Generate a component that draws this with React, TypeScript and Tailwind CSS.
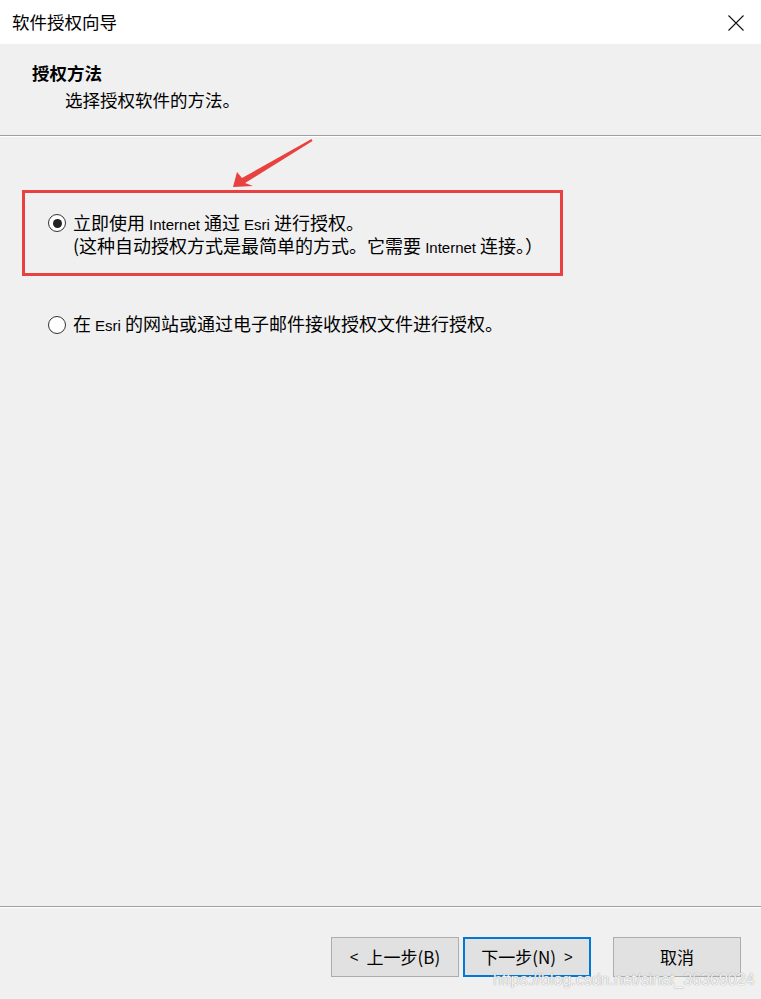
import React from "react";

const cjk = "font-['Noto_Sans_CJK_SC','Microsoft_YaHei',sans-serif]";
const lat = "font-['Liberation_Sans',Arial,sans-serif] text-[15px]";

function Radio({ checked }: { checked?: boolean }) {
  return (
    <span className="flex h-[18px] w-[18px] shrink-0 items-center justify-center rounded-full border border-[#333] bg-white">
      {checked && <span className="h-[9px] w-[9px] rounded-full bg-[#222]" />}
    </span>
  );
}

function Btn({ children, primary }: { children: React.ReactNode; primary?: boolean }) {
  return (
    <button
      className={
        primary
          ? "flex h-[40px] w-[128px] items-center justify-center border-2 border-[#0078d7] bg-[#e1e1e1] text-[17px] text-black"
          : "flex h-[40px] w-[128px] items-center justify-center border border-[#adadad] bg-[#e1e1e1] text-[17px] text-black"
      }
    >
      {children}
    </button>
  );
}

export default function App() {
  return (
    <div className={`relative flex h-[999px] w-[761px] flex-col overflow-hidden bg-[#f0f0f0] text-black ${cjk}`}>
      {/* title bar */}
      <div className="flex h-[44px] shrink-0 items-center justify-between bg-white pl-[12px] pr-[17px]">
        <span className="text-[17.5px] leading-none">软件授权向导</span>
        <svg width="16" height="16" viewBox="0 0 16 16" className="mt-[1px]">
          <path d="M0.5 0.5 L15.5 15.5 M15.5 0.5 L0.5 15.5" stroke="#111" strokeWidth="1.1" fill="none" />
        </svg>
      </div>

      {/* header */}
      <div className="h-[91px] shrink-0 pt-[19px]">
        <div className="pl-[32px] text-[17.5px] font-bold leading-[20px]">授权方法</div>
        <div className="mt-[7px] pl-[65px] text-[17.5px] leading-[20px]">选择授权软件的方法。</div>
      </div>
      <div className="h-px shrink-0 bg-[#a0a0a0]" />
      <div className="h-px shrink-0 bg-white" />

      {/* content */}
      <div className="flex flex-1 flex-col">
        <div className="ml-[22px] mt-[53px] h-[86px] w-[541px] border-[3px] border-[#e8413f] pl-[23px] pt-[19px]">
          <div className="flex items-start gap-[7px]">
            <div className="mt-[2px]">
              <Radio checked />
            </div>
            <div className="text-[18px] leading-[20px]">
              <div>
                立即使用 <span className={lat}>Internet</span> 通过 <span className={lat}>Esri</span> 进行授权。
              </div>
              <div>
                (这种自动授权方式是最简单的方式。它需要 <span className={lat}>Internet</span> 连接。）
              </div>
            </div>
          </div>
        </div>
        <div className="ml-[48px] mt-[37px] flex items-center gap-[7px]">
          <Radio />
          <div className="text-[18px] leading-[20px]">
            在 <span className={lat}>Esri</span> 的网站或通过电子邮件接收授权文件进行授权。
          </div>
        </div>
      </div>

      {/* footer */}
      <div className="h-px shrink-0 bg-[#a0a0a0]" />
      <div className="h-px shrink-0 bg-white" />
      <div className="flex h-[91px] shrink-0 items-start pt-[29px] pl-[331px]">
        <div className="flex gap-[4px]">
          <Btn>
            <span className="mr-[8px] font-['Liberation_Sans',sans-serif] text-[15px]">&lt;</span>上一步(B)
          </Btn>
          <Btn primary>
            下一步(N)<span className="ml-[8px] font-['Liberation_Sans',sans-serif] text-[15px]">&gt;</span>
          </Btn>
        </div>
        <div className="ml-[22px]">
          <Btn>取消</Btn>
        </div>
      </div>

      {/* annotation arrow */}
      <svg className="pointer-events-none absolute left-0 top-0" width="761" height="999">
        <polygon
          points="233,187 237,172 242,178 311.5,139 312.5,141 245,183 253,186"
          fill="#e8413f"
        />
      </svg>

      {/* watermark */}
      <div className="pointer-events-none absolute left-[493px] top-[968px] font-['Liberation_Sans',Arial,sans-serif] text-[16px] leading-[24px] text-white/90 [text-shadow:0_0_1px_rgba(110,110,110,0.9)]">
        https://blog.csdn.net/sinat_36369024
      </div>
    </div>
  );
}
